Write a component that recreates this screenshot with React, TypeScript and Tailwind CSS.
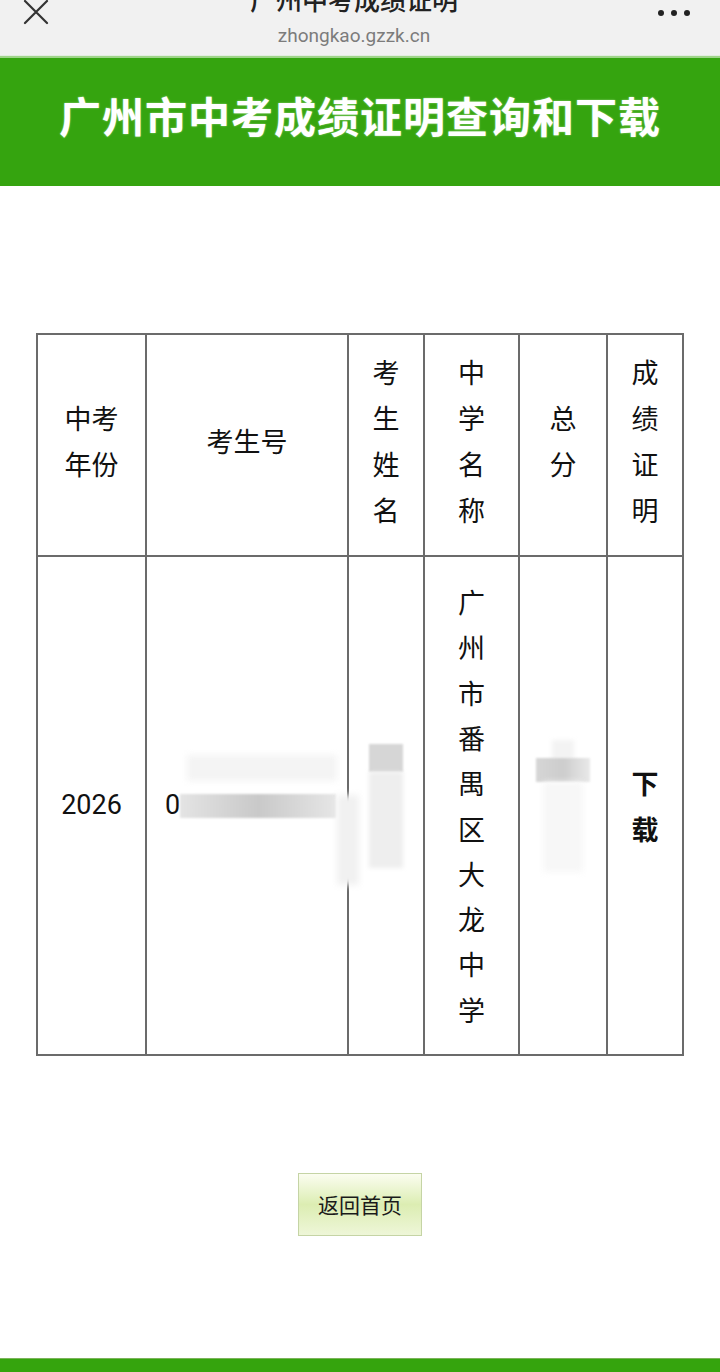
import React from "react";

const CJK = { fontFamily: '"Noto Sans CJK SC", "Noto Sans", sans-serif' };

function Stack({ chars, bold }: { chars: string; bold?: boolean }) {
  return (
    <div className={`flex flex-col items-center leading-[46px] ${bold ? "font-bold" : ""}`}>
      {chars.split("").map((c, i) => (
        <span key={i}>{c}</span>
      ))}
    </div>
  );
}

function TopBar() {
  return (
    <div className="h-[56px] bg-[#f1f1f1] flex items-start justify-between px-[22px] overflow-hidden border-b border-[#e3eee0]">
      <svg width="28" height="28" viewBox="0 0 28 28" className="-mt-[2px]">
        <path d="M3 3 L25 25 M25 3 L3 25" stroke="#333" strokeWidth="2.2" strokeLinecap="round" />
      </svg>
      <div className="flex flex-col items-center -mt-[18px]">
        <span className="text-[26px] leading-[34px] text-[#222] font-medium">广州中考成绩证明</span>
        <span className="text-[19px] leading-[24px] text-[#7c7c7c] mt-[8px]" style={{ fontFamily: '"Roboto", sans-serif' }}>
          zhongkao.gzzk.cn
        </span>
      </div>
      <div className="flex gap-[7px] mt-[10px] mr-[8px]">
        <span className="w-[6px] h-[6px] rounded-full bg-[#222]" />
        <span className="w-[6px] h-[6px] rounded-full bg-[#222]" />
        <span className="w-[6px] h-[6px] rounded-full bg-[#222]" />
      </div>
    </div>
  );
}

export default function App() {
  const cell = "border-2 border-[#6b6b6b] align-middle text-center p-0";
  return (
    <div className="min-h-[1372px] flex flex-col bg-white text-[#111]" style={CJK}>
      <TopBar />
      <div className="h-[130px] bg-[#35a40f] flex items-center justify-center border-t-2 border-[#9fd48a] pb-[14px]">
        <h1 className="text-[42px] leading-[56px] font-bold text-white tracking-[1px] [text-shadow:0_0_2px_rgba(230,255,220,0.6)]">
          广州市中考成绩证明查询和下载
        </h1>
      </div>

      <div className="flex justify-center mt-[147px]">
        <table className="border-collapse text-[27px]">
          <tbody>
            <tr className="h-[222px]">
              <td className={`${cell} w-[109px] pb-[8px]`}>
                <div className="leading-[46px]">
                  中考
                  <br />
                  年份
                </div>
              </td>
              <td className={`${cell} w-[202px] pb-[8px]`}>考生号</td>
              <td className={`${cell} w-[76px] pb-[8px]`}>
                <Stack chars="考生姓名" />
              </td>
              <td className={`${cell} w-[95px] pb-[8px]`}>
                <Stack chars="中学名称" />
              </td>
              <td className={`${cell} w-[88px] pb-[8px]`}>
                <Stack chars="总分" />
              </td>
              <td className={`${cell} w-[76px] pb-[8px]`}>
                <Stack chars="成绩证明" />
              </td>
            </tr>
            <tr className="h-[499px]">
              <td className={cell} style={{ fontFamily: '"Roboto", sans-serif' }}>
                2026
              </td>
              <td className={`${cell} text-left`}>
                <div className="relative flex items-center pl-[18px]">
                  <span style={{ fontFamily: '"Roboto", sans-serif' }}>0</span>
                  <div className="w-[156px] h-[24px] bg-gradient-to-r from-[#e4e4e4] via-[#c9c9c9] to-[#e6e6e6] blur-[1px]" />
                  <div className="absolute left-[40px] -top-[30px] w-[150px] h-[26px] bg-[#f4f4f4] blur-[3px]" />
                  <div className="absolute left-[190px] top-[10px] w-[22px] h-[90px] bg-[#f1f1f1] blur-[3px]" />
                </div>
              </td>
              <td className={cell}>
                <div className="flex flex-col items-center">
                  <div className="w-[34px] h-[28px] bg-[#d6d6d6] blur-[1px]" />
                  <div className="w-[34px] h-[96px] bg-[#eeeeee] blur-[2px]" />
                </div>
              </td>
              <td className={cell}>
                <div className="flex flex-col items-center leading-[45.3px]">
                  {"广州市番禺区大龙中学".split("").map((c, i) => (
                    <span key={i}>{c}</span>
                  ))}
                </div>
              </td>
              <td className={cell}>
                <div className="flex flex-col items-center">
                  <div className="w-[22px] h-[20px] bg-[#f3f3f3] blur-[2px] -mb-[2px]" />
                  <div className="w-[54px] h-[24px] bg-gradient-to-r from-[#d6d6d6] via-[#cdcdcd] to-[#e9e9e9] blur-[1px]" />
                  <div className="w-[40px] h-[90px] bg-[#f7f7f7] blur-[3px]" />
                </div>
              </td>
              <td className={cell}>
                <Stack chars="下载" bold />
              </td>
            </tr>
          </tbody>
        </table>
      </div>

      <div className="flex justify-center mt-[117px]">
        <button className="w-[124px] h-[63px] border border-[#c5d4a5] bg-gradient-to-b from-[#fbfdf0] via-[#dcedb2] to-[#eef6d8] text-[21px] text-[#1a1a1a]">
          返回首页
        </button>
      </div>

      <div className="mt-auto h-[14px] bg-[#35a40d] border-t border-[#7bb35a]" />
    </div>
  );
}
